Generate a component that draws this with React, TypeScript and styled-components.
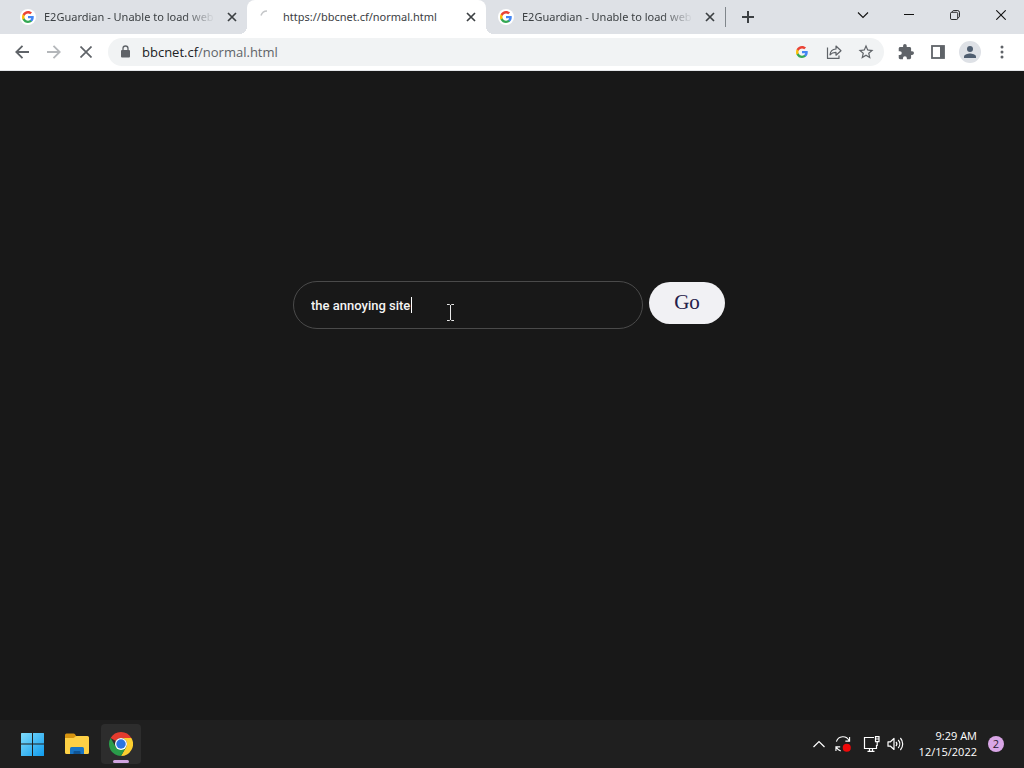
import React from "react";
import styled, { createGlobalStyle } from "styled-components";

const GlobalStyle = createGlobalStyle`
  * { box-sizing: border-box; }
  body { margin: 0; background: #181818; font-family: "Open Sans", "Noto Sans", sans-serif; }
  button { border: 0; padding: 0; margin: 0; background: none; font: inherit; color: inherit; }
  svg { display: block; flex: none; }
`;

const Screen = styled.div`
  min-height: 100vh;
  display: flex;
  flex-direction: column;
`;

const TabStrip = styled.header`
  display: flex;
  height: 34px;
  padding-left: 8px;
  background: #dee1e6;
  color: #3c4043;
`;

const Tab = styled.div<{ $active?: boolean }>`
  position: relative;
  flex: 0 1 239px;
  min-width: 0;
  display: flex;
  align-items: center;
  gap: 9px;
  padding: 0 7px 0 13px;
  border-radius: 8px 8px 0 0;
  background: ${(p) => (p.$active ? "#ffffff" : "transparent")};
  z-index: ${(p) => (p.$active ? 1 : 0)};
  &::before,
  &::after {
    content: "";
    display: ${(p) => (p.$active ? "block" : "none")};
    position: absolute;
    bottom: 0;
    width: 8px;
    height: 8px;
  }
  &::before {
    left: -8px;
    background: radial-gradient(circle at 0 0, transparent 8px, #ffffff 8px);
  }
  &::after {
    right: -8px;
    background: radial-gradient(circle at 100% 0, transparent 8px, #ffffff 8px);
  }
`;

const TabTitle = styled.span<{ $fade?: boolean }>`
  flex: 1;
  min-width: 0;
  overflow: hidden;
  white-space: nowrap;
  font-family: "Noto Sans", sans-serif;
  font-size: 11px;
  line-height: 18px;
  mask-image: ${(p) => (p.$fade ? "linear-gradient(to left, transparent, #000 32px)" : "none")};
`;

const TabClose = styled.button`
  display: grid;
  place-items: center;
  width: 16px;
  height: 16px;
`;

const NewTab = styled.button`
  display: grid;
  place-items: center;
  align-self: center;
  width: 45px;
  height: 20px;
  border-left: 1px solid #80868b;
`;

const WindowControls = styled.div`
  display: flex;
  margin-left: auto;
  color: #111111;
`;

const WindowButton = styled.button`
  display: grid;
  place-items: center;
  width: 46px;
  height: 29px;
`;

const Toolbar = styled.nav`
  display: flex;
  align-items: center;
  height: 37px;
  padding: 0 6px;
  background: #ffffff;
  color: #5f6368;
  border-bottom: 1px solid #e4e6e9;
`;

const ToolButton = styled.button<{ $faded?: boolean }>`
  display: grid;
  place-items: center;
  flex: none;
  width: 32px;
  height: 28px;
  color: ${(p) => (p.$faded ? "#b4b7ba" : "inherit")};
`;

const Omnibox = styled.div`
  flex: 1;
  min-width: 0;
  display: flex;
  align-items: center;
  height: 28px;
  margin: 0 6px;
  padding: 0 2px 0 9px;
  border-radius: 14px;
  background: #f1f3f4;
`;

const Address = styled.a`
  flex: 1;
  margin-left: 9px;
  font-size: 13px;
  line-height: 20px;
  text-decoration: none;
  color: #5f6368;
`;

const Host = styled.span`
  color: #202124;
`;

const Avatar = styled.span`
  display: grid;
  place-items: center;
  width: 22px;
  height: 22px;
  border-radius: 50%;
  background: #dee1e6;
`;

const Page = styled.main`
  flex: 1;
  display: flex;
  justify-content: center;
  align-items: flex-start;
  padding: 210px 16px 16px;
  background: #181818;
`;

const SearchForm = styled.form`
  display: flex;
  align-items: flex-start;
  gap: 6px;
  padding-right: 6px;
`;

const Field = styled.div`
  position: relative;
`;

const SearchInput = styled.input`
  display: block;
  width: 350px;
  height: 48px;
  padding: 0 17px;
  border: 1px solid #4a4a4a;
  border-radius: 24px;
  outline: 0;
  background: transparent;
  color: #f4f4f4;
  font: 500 13px/20px Roboto, sans-serif;
`;

const Caret = styled.span`
  position: absolute;
  top: 16px;
  left: 118px;
  width: 1px;
  height: 16px;
  background: #ffffff;
`;

const Pointer = styled.svg`
  position: absolute;
  top: 23px;
  left: 153px;
`;

const GoButton = styled.button`
  width: 76px;
  height: 42px;
  padding-bottom: 2px;
  border-radius: 21px;
  background: #f1f1f4;
  color: #24204a;
  font: 21px/24px "Liberation Serif", serif;
  margin-top: 1px;
`;

const Taskbar = styled.footer`
  display: flex;
  align-items: center;
  height: 48px;
  padding: 0 20px 0 13px;
  background: #1f1f1f;
  color: #ffffff;
`;

const Apps = styled.div`
  display: flex;
  gap: 4px;
`;

const AppButton = styled.button<{ $active?: boolean }>`
  position: relative;
  display: grid;
  place-items: center;
  width: 40px;
  height: 40px;
  border-radius: 4px;
  background: ${(p) => (p.$active ? "#2d2d2d" : "transparent")};
  &::after {
    content: "";
    display: ${(p) => (p.$active ? "block" : "none")};
    position: absolute;
    bottom: 1px;
    left: 12px;
    width: 16px;
    height: 3px;
    border-radius: 2px;
    background: #d0a4e0;
  }
`;

const Tray = styled.div`
  display: flex;
  align-items: center;
  margin-left: auto;
`;

const TrayGroup = styled.div`
  display: flex;
  margin-right: 4px;
`;

const TrayButton = styled.button`
  display: grid;
  place-items: center;
  width: 24px;
  height: 40px;
`;

const Clock = styled.time`
  margin-left: 10px;
  min-width: 60px;
  text-align: right;
  font-size: 11px;
  line-height: 16px;
  white-space: pre-line;
`;

const Badge = styled.span`
  display: grid;
  place-items: center;
  width: 16px;
  height: 16px;
  margin-left: 11px;
  border-radius: 50%;
  background: #d9a6e6;
  color: #2a1a30;
  font-size: 11px;
  line-height: 16px;
`;

const GoogleG = ({ size = 14 }: { size?: number }) => (
  <svg width={size} height={size} viewBox="2 2 44 44">
    <path fill="#4285f4" d="M45.1 24.5c0-1.6-.1-3.1-.4-4.5H24v8.5h11.8c-.5 2.8-2.1 5.1-4.4 6.7v5.5h7.1c4.2-3.9 6.6-9.5 6.6-16.2z" />
    <path fill="#34a853" d="M24 46c5.900 0 10.900-2 14.500-5.300l-7.100-5.500c-2 1.300-4.500 2.100-7.400 2.100-5.700 0-10.600-3.900-12.300-9.100H4.300v5.700C8 41.100 15.400 46 24 46z" />
    <path fill="#fbbc05" d="M11.700 28.200c-.4-1.300-.7-2.700-.7-4.200s.2-2.900.7-4.200v-5.700H4.300C2.900 17.100 2 20.500 2 24s.9 6.900 2.300 9.900z" />
    <path fill="#ea4335" d="M24 10.800c3.200 0 6.100 1.100 8.400 3.300l6.300-6.300C34.900 4.200 29.900 2 24 2 15.400 2 8 6.900 4.300 14.100l7.400 5.700c1.700-5.200 6.600-9 12.300-9z" />
  </svg>
);

const Favicon = styled.span`
  display: grid;
  place-items: center;
  flex: none;
  width: 14px;
  height: 14px;
  border-radius: 50%;
  background: #ffffff;
  box-shadow: 0 0 0 1px #ffffff;
`;

const CloseGlyph = () => (
  <svg width="10" height="10" viewBox="0 0 10 10" stroke="currentColor" strokeWidth="1.7">
    <path d="M1 1l8 8M9 1l-8 8" />
  </svg>
);

const SideTab = () => (
  <Tab>
    <Favicon><GoogleG size={12} /></Favicon>
    <TabTitle $fade>E2Guardian - Unable to load web</TabTitle>
    <TabClose aria-label="Close tab"><CloseGlyph /></TabClose>
  </Tab>
);

export default function App() {
  return (
    <Screen>
      <GlobalStyle />
      <TabStrip>
        <SideTab />
        <Tab $active>
          <svg width="14" height="14" viewBox="0 0 14 14" fill="none" stroke="#c4c6c8" strokeWidth="1.500">
            <path d="M1 5.500A6.500 6.500 0 0 1 7 1" />
          </svg>
          <TabTitle>https://bbcnet.cf/normal.html</TabTitle>
          <TabClose aria-label="Close tab"><CloseGlyph /></TabClose>
        </Tab>
        <SideTab />
        <NewTab aria-label="New tab">
          <svg width="12" height="12" viewBox="0 0 12 12" stroke="currentColor" strokeWidth="2">
            <path d="M6 0v12M0 6h12" />
          </svg>
        </NewTab>
        <WindowControls>
          <WindowButton aria-label="Search tabs">
            <svg width="12" height="12" viewBox="0 0 12 12" fill="none" stroke="currentColor" strokeWidth="1.100">
              <path d="M1 3.500l5 5 5-5" />
            </svg>
          </WindowButton>
          <WindowButton aria-label="Minimize">
            <svg width="10" height="10" viewBox="0 0 10 10" stroke="currentColor">
              <path d="M0 4.500h10" />
            </svg>
          </WindowButton>
          <WindowButton aria-label="Restore">
            <svg width="10" height="10" viewBox="0 0 11 11" fill="none" stroke="currentColor">
              <rect x=".5" y="2.500" width="8" height="8" rx="1.500" />
              <path d="M2.500 2.300C2.600 1.200 3.300.5 4.500.5H8A2.500 2.500 0 0 1 10.500 3v3.500c0 1.200-.7 1.900-1.800 2" />
            </svg>
          </WindowButton>
          <WindowButton aria-label="Close">
            <svg width="10" height="10" viewBox="0 0 10 10" stroke="currentColor" strokeWidth="1.100">
              <path d="M.3.3l9.400 9.400M9.700.3L.3 9.700" />
            </svg>
          </WindowButton>
        </WindowControls>
      </TabStrip>

      <Toolbar>
        <ToolButton aria-label="Back">
          <svg width="14" height="14" viewBox="0 0 14 14" fill="none" stroke="currentColor" strokeWidth="1.800">
            <path d="M14 7H1.500M7.500.8L1.300 7l6.200 6.200" />
          </svg>
        </ToolButton>
        <ToolButton $faded aria-label="Forward">
          <svg width="14" height="14" viewBox="0 0 14 14" fill="none" stroke="currentColor" strokeWidth="1.800">
            <path d="M0 7h12.500M6.500.8L12.700 7l-6.200 6.200" />
          </svg>
        </ToolButton>
        <ToolButton aria-label="Stop loading">
          <svg width="12" height="12" viewBox="0 0 12 12" stroke="currentColor" strokeWidth="1.700">
            <path d="M.5.5l11 11M11.500.5l-11 11" />
          </svg>
        </ToolButton>
        <Omnibox>
          <svg width="16" height="14" viewBox="0 0 16 14" fill="none">
            <rect x="4" y="5" width="9" height="7.500" rx="1" fill="#5f6368" />
            <path d="M6 5.500V3.500a2.500 2.500 0 0 1 5 0v2" stroke="#5f6368" strokeWidth="1.300" />
          </svg>
          <Address href="#"><Host>bbcnet.cf</Host>/normal.html</Address>
          <ToolButton aria-label="Search with Google"><GoogleG size={12} /></ToolButton>
          <ToolButton aria-label="Share this page">
            <svg width="16" height="14" viewBox="0 0 16 14" fill="none" stroke="currentColor" strokeWidth="1.200" strokeLinejoin="round">
              <path d="M1.500 2.500v10.900h11.500v-3" />
              <path d="M4 9.800C4.300 6.500 6.500 4.200 10 4V1l5 4.700-5 4.500V7.300C7.300 7.200 5.500 8 4 9.800z" />
            </svg>
          </ToolButton>
          <ToolButton aria-label="Bookmark this tab">
            <svg width="18" height="18" viewBox="0 0 24 24" fill="currentColor">
              <path d="M22 9.240l-7.190-.62L12 2 9.190 8.630 2 9.240l5.460 4.730L5.820 21 12 17.270 18.180 21l-1.630-7.030zM12 15.400l-3.760 2.270 1-4.280-3.320-2.880 4.380-.38L12 6.100l1.710 4.040 4.380.38-3.320 2.880 1 4.280z" />
            </svg>
          </ToolButton>
        </Omnibox>
        <ToolButton aria-label="Extensions">
          <svg width="16" height="16" viewBox="1 1 22 22" fill="currentColor">
            <path d="M20.500 11H19V7c0-1.100-.9-2-2-2h-4V3.500a2.500 2.500 0 0 0-5 0V5H4c-1.100 0-2 .9-2 2v3.800h1.500a2.700 2.700 0 0 1 0 5.400H2V20c0 1.100.9 2 2 2h3.800v-1.500a2.700 2.700 0 0 1 5.400 0V22H17c1.100 0 2-.9 2-2v-4h1.500a2.500 2.500 0 0 0 0-5z" />
          </svg>
        </ToolButton>
        <ToolButton aria-label="Side panel">
          <svg width="14" height="14" viewBox="0 0 14 14" fill="none">
            <rect x="1" y="1" width="12" height="12" stroke="currentColor" strokeWidth="1.800" />
            <path d="M9 1H13v12H9z" fill="currentColor" />
          </svg>
        </ToolButton>
        <ToolButton aria-label="Profile">
          <Avatar>
            <svg width="12" height="12" viewBox="0 0 12 12" fill="#4f5e70">
              <circle cx="6" cy="3" r="3" />
              <path d="M0 12v-1.500C0 8.500 4 7.500 6 7.500s6 1 6 3V12z" />
            </svg>
          </Avatar>
        </ToolButton>
        <ToolButton aria-label="Menu">
          <svg width="4" height="14" viewBox="0 0 4 14" fill="currentColor">
            <circle cx="2" cy="2" r="1.500" />
            <circle cx="2" cy="7" r="1.500" />
            <circle cx="2" cy="12" r="1.500" />
          </svg>
        </ToolButton>
      </Toolbar>

      <Page>
        <SearchForm onSubmit={(e) => e.preventDefault()}>
          <Field>
            <SearchInput type="text" aria-label="Search" defaultValue="the annoying site" />
            <Caret />
            <Pointer width="9" height="17" viewBox="0 0 9 17" fill="none" stroke="#e8e8e8">
              <path d="M1 .5h2.500l1 1 1-1H8M4.500 1v15M1 16.500h2.500l1-1 1 1H8" />
            </Pointer>
          </Field>
          <GoButton type="submit">Go</GoButton>
        </SearchForm>
      </Page>

      <Taskbar>
        <Apps>
          <AppButton aria-label="Start">
            <svg width="24" height="24" viewBox="0 0 24 24">
              <defs>
                <linearGradient id="start" x1="0" y1="0" x2="1" y2="1">
                  <stop offset="0" stopColor="#7fdcfb" />
                  <stop offset="1" stopColor="#0f9bee" />
                </linearGradient>
              </defs>
              <path fill="url(#start)" d="M.5 1H11v10.500H0v-10zM12 1h10.500q.5 0 .5.500v10H12zM0 12.500h11V24H.5q-.5 0-.5-.5zM12 12.500h11v11q0 .5-.5.500H12z" />
            </svg>
          </AppButton>
          <AppButton aria-label="File Explorer">
            <svg width="24" height="24" viewBox="0 0 24 24">
              <path fill="#d69410" d="M0 3Q0 1.500 1.500 1.500h7q1 0 1.500.8L11.500 4.500v5H0z" />
              <path fill="#fdd045" d="M0 6h7.500q1 0 1.800-.6L10 4.900Q10.500 4 11.500 4h11Q24 4 24 5.500v15q0 1.500-1.500 1.500h-21Q0 22 0 20.500z" />
              <path fill="#1975c5" d="M5 22v-5.500q0-1.500 1.500-1.500h11q1.500 0 1.500 1.500V22z" />
              <path fill="#0f5494" d="M8.500 22v-2q0-1 1-1h5q1 0 1 1v2z" />
            </svg>
          </AppButton>
          <AppButton $active aria-label="Google Chrome">
            <svg width="24" height="24" viewBox="0 0 48 48">
              <path fill="#e33b2e" d="M24 0A24 24 0 0 1 44.800 12H24a12 12 0 0 0-10.400 6L3.200 12A24 24 0 0 1 24 0z" />
              <path fill="#2a9c4a" d="M3.200 12l10.400 18A12 12 0 0 0 24 36h.2L23.500 48A24 24 0 0 1 3.200 12z" />
              <path fill="#fdcf2f" d="M44.800 12A24 24 0 0 1 24 48l10.400-18A12 12 0 0 0 24 12z" />
              <path fill="#2a9c4a" d="M13.600 30L34.400 30 24 48z" />
              <circle cx="24" cy="24" r="12" fill="#ffffff" />
              <circle cx="24" cy="24" r="9.500" fill="#2a74e0" />
            </svg>
          </AppButton>
        </Apps>
        <Tray>
          <TrayGroup>
            <TrayButton aria-label="Show hidden icons">
              <svg width="12" height="8" viewBox="0 0 12 8" fill="none" stroke="currentColor" strokeWidth="1.200">
                <path d="M.5 7L6 1.500 11.500 7" />
              </svg>
            </TrayButton>
            <TrayButton aria-label="Update status">
              <svg width="16" height="16" viewBox="0 0 17 17" fill="none" stroke="currentColor" strokeWidth="1.200">
                <path d="M1.500 6A7.200 7.200 0 0 1 15 5M15.500 1v4.500H11M6 15.800A7 7 0 0 1 1.500 12M1 16v-4.500h4.500" />
                <circle cx="12.500" cy="12.500" r="4.300" fill="#f00a0a" stroke="none" />
              </svg>
            </TrayButton>
          </TrayGroup>
          <TrayButton aria-label="Network">
            <svg width="17" height="16" viewBox="0 0 17 16" fill="none" stroke="currentColor" strokeWidth="1.200">
              <path d="M11 1.500H1.500v11h12V9M4.500 15.400h7M6.500 12.500v3M9.500 12.500v3M12.500.6h3.500v5h-3.500zM14.200 5.500v4.500M12.500 3h3.500" />
            </svg>
          </TrayButton>
          <TrayButton aria-label="Volume">
            <svg width="17" height="14" viewBox="0 0 17 14" fill="none" stroke="currentColor" strokeWidth="1.200" strokeLinejoin="round">
              <path d="M1 4.800h2.500L7 1.500v11L3.500 9.200H1zM9 5a3 3 0 0 1 0 4M11.200 3a6 6 0 0 1 0 8M13.400 1a9 9 0 0 1 0 12" />
            </svg>
          </TrayButton>
          <Clock>{"9:29 AM\n12/15/2022"}</Clock>
          <Badge>2</Badge>
        </Tray>
      </Taskbar>
    </Screen>
  );
}
